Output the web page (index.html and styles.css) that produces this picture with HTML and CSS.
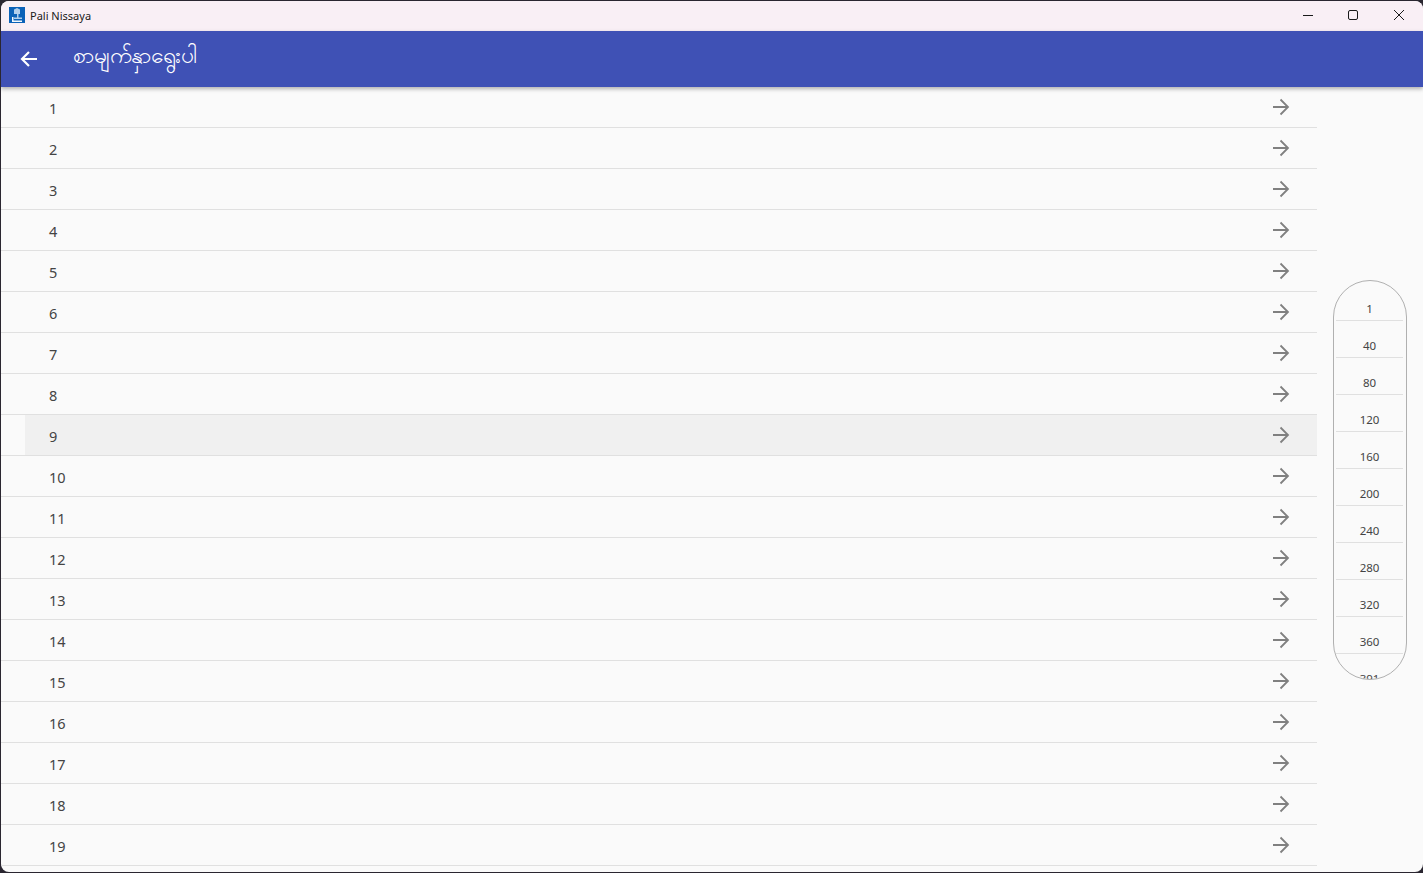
FILE: index.html
```html
<!DOCTYPE html>
<html lang="my">
<head>
    <meta charset="UTF-8">
    <meta name="viewport" content="width=device-width, initial-scale=1.0">
    <title>Pali Nissaya</title>
    <link rel="stylesheet" href="styles.css">
</head>
<body>
    <div class="window">
        <div class="titlebar">
            <svg class="app-icon" width="16" height="16" viewBox="0 0 16 16">
                <rect width="16" height="16" fill="#0b62b8"/>
                <path d="M5 2.5 8 1l3 1.5V7H9.5v3.5H13V12H5v-1.5h3V7H5z" fill="#cfe3f5" opacity=".85"/>
                <path d="M3 10h1.5v3.5H13V15H3z" fill="#f2f8fd"/>
            </svg>
            <span class="app-name">Pali Nissaya</span>
            <div class="window-buttons">
                <svg width="10" height="10" viewBox="0 0 10 10"><path d="M0 5.500h10" stroke="#1a1a1a" fill="none"/></svg>
                <svg width="10" height="10" viewBox="0 0 10 10"><rect x=".5" y=".5" width="9" height="9" rx="1.5" stroke="#1a1a1a" fill="none"/></svg>
                <svg width="10" height="10" viewBox="0 0 10 10"><path d="M0 0l10 10M10 0L0 10" stroke="#1a1a1a" fill="none"/></svg>
            </div>
        </div>
        <div class="appbar">
            <svg class="back" width="20" height="20" viewBox="0 0 20 20"><path d="M18 10H3M10 3l-7 7 7 7" stroke="#fff" stroke-width="2.2" fill="none"/></svg>
            <span class="appbar-title">စာမျက်နှာရွေးပါ</span>
        </div>
        <div class="content">
            <div class="list" id="list"></div>
            <div class="scale-wrap">
                <div class="scale" id="scale"></div>
            </div>
        </div>
    </div>

    <script>
        let list = document.getElementById("list");
        let scale = document.getElementById("scale");
        let arrow = '<svg width="18" height="18" viewBox="0 0 18 18"><path d="M0 9h15M7.500 1.500 15 9l-7.500 7.500" stroke="#808080" stroke-width="1.800" fill="none"/></svg>';

        for (let i = 1; i <= 19; i++) {
            let row = document.createElement("div");
            row.className = i === 9 ? "row row-hover" : "row";
            row.innerHTML = '<div class="row-inner"><span class="row-num">' + i + '</span>' + arrow + '</div>';
            list.appendChild(row);
        }

        let marks = [1, 40, 80, 120, 160, 200, 240, 280, 320, 360, 391];
        marks.forEach(function (m) {
            let item = document.createElement("div");
            item.className = "scale-item";
            item.textContent = m;
            scale.appendChild(item);
        });
    </script>
</body>
</html>
```

FILE: styles.css
```css
* {
    box-sizing: border-box;
}
html, body {
    height: 100%;
    margin: 0;
}
body {
    background: #2a2630;
    font-family: "Noto Sans", "Open Sans", sans-serif;
    overflow: hidden;
}
.window {
    height: 871px;
    margin: 1px 0 0 1px;
    background: #fafafa;
    border-radius: 8px;
    overflow: hidden;
    display: flex;
    flex-direction: column;
}
.titlebar {
    height: 30px;
    flex: none;
    background: #f9eff5;
    display: flex;
    align-items: center;
    padding: 0 0 2px 8px;
}
.app-icon {
    margin-right: 5px;
}
.app-name {
    font-size: 11px;
    color: #1a1a1a;
}
.window-buttons {
    margin-left: auto;
    display: flex;
    gap: 35px;
    padding-right: 19px;
}
.window-buttons svg:last-child {
    margin-left: 1px;
}
.appbar {
    height: 56px;
    flex: none;
    background: #3f51b5;
    display: flex;
    align-items: center;
    padding-left: 18px;
    box-shadow: 0 2px 4px rgba(0, 0, 0, 0.3);
    position: relative;
}
.appbar-title {
    margin-left: 34px;
    margin-top: -6px;
    font-size: 22.8px;
    color: #fff;
}
.content {
    flex: 1;
    display: flex;
    min-height: 0;
}
.list {
    width: 1316px;
    flex: none;
}
.row {
    height: 41px;
    border-bottom: 1px solid #e0e0e0;
}
.row-inner {
    height: 40px;
    margin-left: 24px;
    padding: 0 26px 0 24px;
    display: flex;
    align-items: center;
    justify-content: space-between;
}
.row-hover .row-inner {
    background: #f0f0f0;
}
.row-num {
    font-size: 14.5px;
    color: #444;
    padding-top: 1px;
}
.scale-wrap {
    flex: 1;
    display: flex;
    align-items: center;
    padding-left: 16px;
}
.scale {
    width: 74px;
    height: 400px;
    border: 1.5px solid #b0b0b0;
    border-radius: 37px;
    overflow: hidden;
    padding: 3px 3px 0 2px;
}
.scale-item {
    height: 37px;
    padding-top: 17px;
    border-bottom: 1px solid #e0e0e0;
    font-size: 11.5px;
    line-height: 16px;
    color: #444;
    text-align: center;
}
```
